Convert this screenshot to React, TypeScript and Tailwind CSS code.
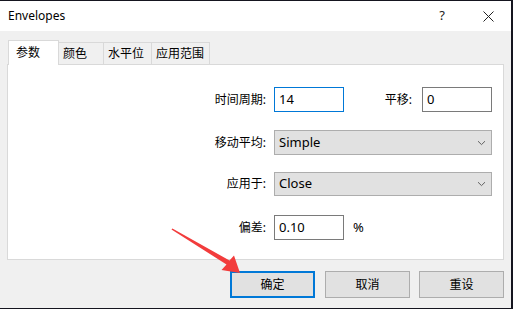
import React from 'react';

const font = '"Noto Sans", "Noto Sans CJK SC", sans-serif';

function Chevron() {
    return (
        <svg width="9" height="6" viewBox="0 0 9 6" className="mr-[5px]">
            <path d="M1 1.2 L4.5 4.6 L8 1.2" fill="none" stroke="#606060" strokeWidth="1" />
        </svg>
    );
}

function Combo({ value }: { value: string }) {
    return (
        <div className="w-[218px] h-full bg-[#e1e1e1] border border-[#adadad] flex items-center justify-between pl-[4px]">
            <span className="text-[13px] text-black">{value}</span>
            <Chevron />
        </div>
    );
}

function Field({ value, focused }: { value: string; focused?: boolean }) {
    return (
        <div
            className={`w-[70px] h-full bg-white border flex items-center pl-[4px] text-[13px] text-black ${
                focused ? 'border-[#0078d7]' : 'border-[#7a7a7a]'
            }`}
        >
            {value}
        </div>
    );
}

function Label({ text }: { text: string }) {
    return <div className="w-[266px] pr-[8px] text-right text-[12px] text-black">{text}</div>;
}

export default function App() {
    const tabs = [
        { label: '颜色', w: 'w-[45px]' },
        { label: '水平位', w: 'w-[48px]' },
        { label: '应用范围', w: 'w-[58px]' },
    ];

    return (
        <div className="w-[513px] h-[309px] bg-[#15151f] pt-px relative" style={{ fontFamily: font }}>
            <div className="w-[511px] h-[307px] bg-[#f0f0f0] flex flex-col">
                {/* title bar */}
                <div className="h-[30px] bg-white flex items-center pl-[8px]">
                    <span className="text-[12px] text-black">Envelopes</span>
                    <span className="ml-auto text-[13px] text-[#222] mr-[38px]">?</span>
                    <svg width="11" height="11" viewBox="0 0 11 11" className="mr-[17px]">
                        <path d="M0.5 0.5 L10.5 10.5 M10.5 0.5 L0.5 10.5" stroke="#222" strokeWidth="1" />
                    </svg>
                </div>

                {/* tabs */}
                <div className="flex items-end pl-[8px] mt-[9px] h-[24px] relative z-10">
                    <div className="w-[51px] bg-white border border-b-0 border-[#d9d9d9] text-[12px] text-black pl-[7px] pt-[3px] -mb-px h-[25px]">
                        参数
                    </div>
                    {tabs.map(t => (
                        <div
                            key={t.label}
                            className={`${t.w} h-[22px] border border-l-0 border-b-0 border-[#d9d9d9] text-[12px] text-black pl-[4px] pt-[2px]`}
                        >
                            {t.label}
                        </div>
                    ))}
                </div>

                {/* panel */}
                <div className="ml-[7px] w-[497px] h-[196px] bg-white border border-[#d9d9d9] flex flex-col">
                    <div className="flex items-center h-[25px] mt-[22px]">
                        <Label text="时间周期:" />
                        <Field value="14" focused />
                        <div className="w-[78px] pr-[10px] text-right text-[12px] text-black">平移:</div>
                        <Field value="0" />
                    </div>
                    <div className="flex items-center h-[25px] mt-[18px]">
                        <Label text="移动平均:" />
                        <Combo value="Simple" />
                    </div>
                    <div className="flex items-center h-[24px] mt-[17px]">
                        <Label text="应用于:" />
                        <Combo value="Close" />
                    </div>
                    <div className="flex items-center h-[25px] mt-[19px]">
                        <Label text="偏差:" />
                        <Field value="0.10" />
                        <span className="ml-[9px] text-[13px] text-black">%</span>
                    </div>
                </div>

                {/* buttons */}
                <div className="flex justify-end pr-[7px] mt-[11px]">
                    <button className="w-[85px] h-[27px] bg-[#e1e1e1] border-2 border-[#0078d7] text-[12px] text-black">
                        确定
                    </button>
                    <button className="ml-[10px] w-[85px] h-[27px] bg-[#e1e1e1] border border-[#adadad] text-[12px] text-black">
                        取消
                    </button>
                    <button className="ml-[9px] w-[85px] h-[27px] bg-[#e1e1e1] border border-[#adadad] text-[12px] text-black">
                        重设
                    </button>
                </div>
            </div>

            {/* red annotation arrow */}
            <svg className="absolute left-0 top-0 pointer-events-none" width="513" height="309" viewBox="0 0 513 309">
                <polygon
                    points="171.5,229.6 172.4,228.4 229.5,260.5 234,255.5 240,273 221.5,270 226.5,264.5"
                    fill="#f23c3c"
                />
            </svg>
        </div>
    );
}
